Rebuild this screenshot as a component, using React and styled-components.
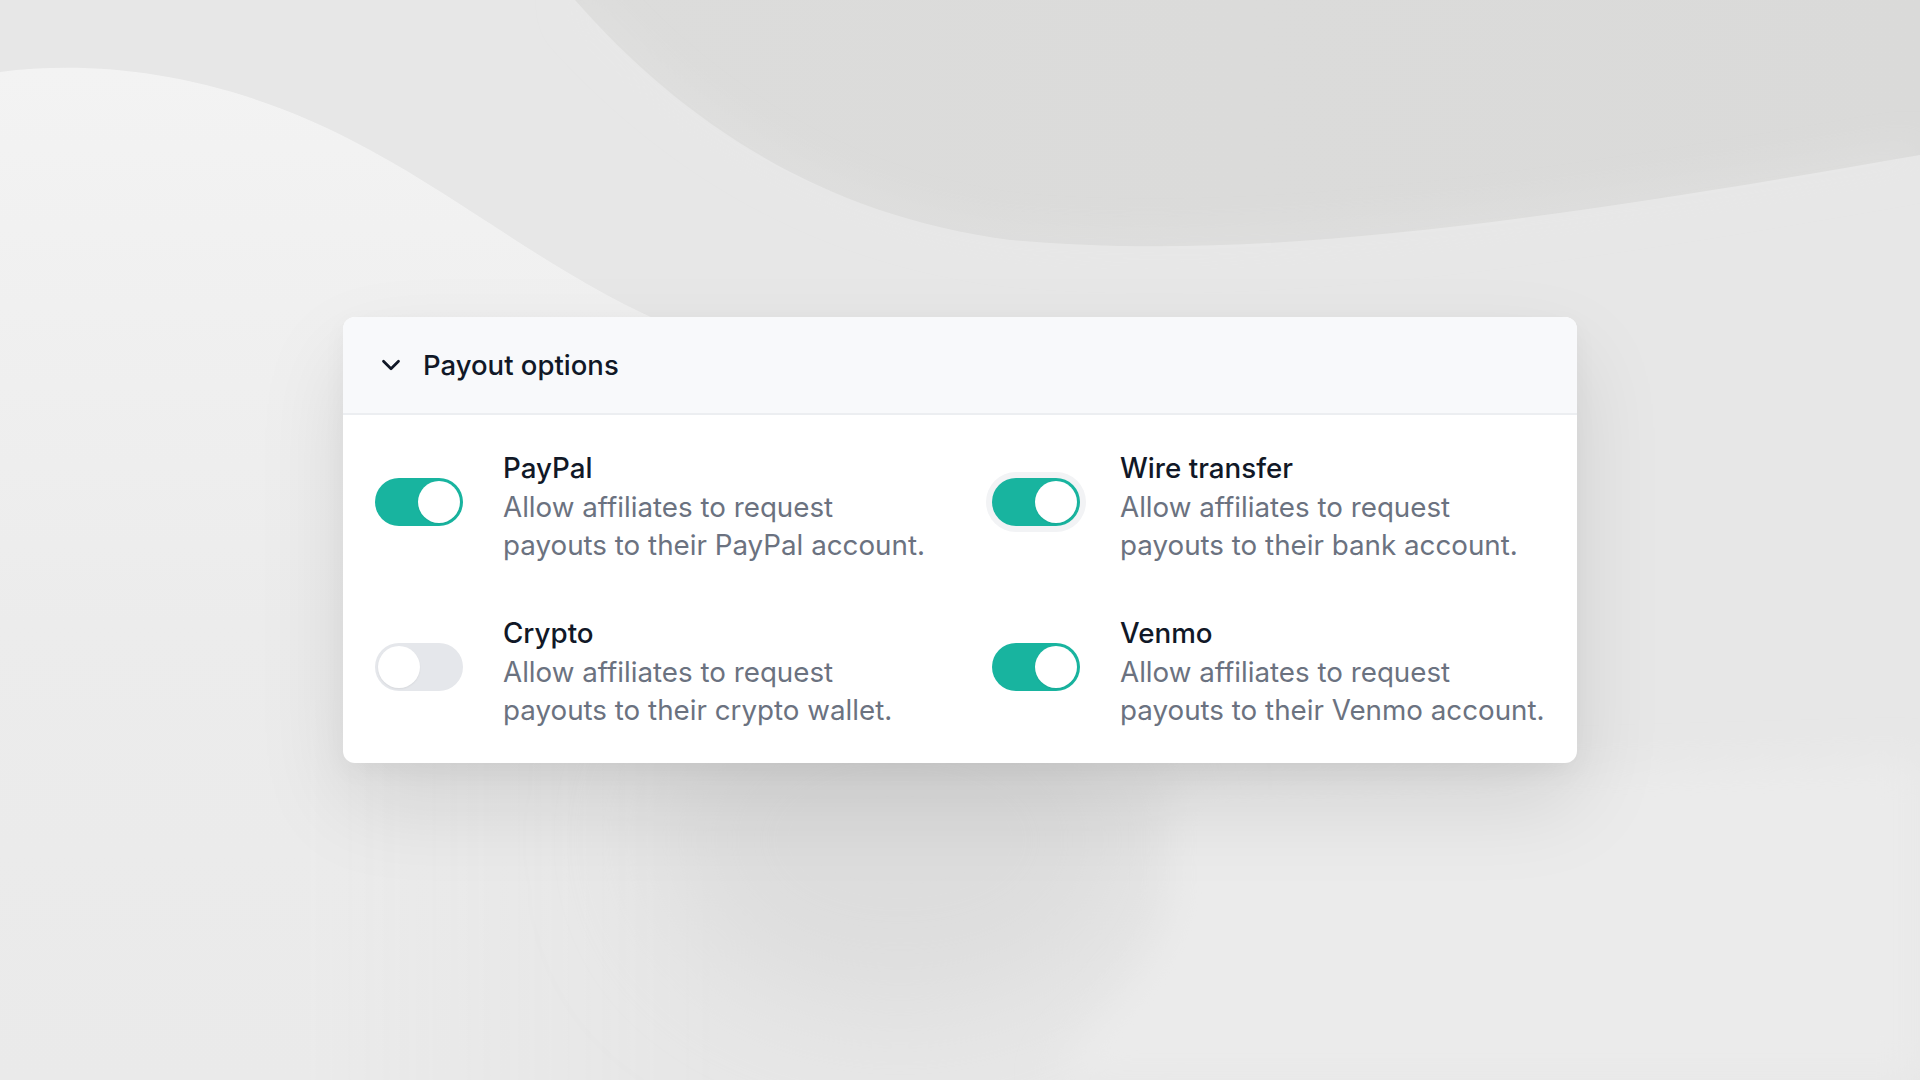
import { useState } from "react";
import styled, { createGlobalStyle } from "styled-components";

const GlobalStyle = createGlobalStyle`
  html, body {
    margin: 0;
    padding: 0;
    height: 100%;
  }
  body {
    font-family: Inter, "Noto Sans", "Liberation Sans", sans-serif;
    -webkit-font-smoothing: antialiased;
  }
`;

// options shown in the card
const payoutOptions = [
  {
    id: "paypal",
    title: "PayPal",
    lines: ["Allow affiliates to request", "payouts to their PayPal account."],
    enabled: true,
  },
  {
    id: "wire",
    title: "Wire transfer",
    lines: ["Allow affiliates to request", "payouts to their bank account."],
    enabled: true,
    focused: true,
  },
  {
    id: "crypto",
    title: "Crypto",
    lines: ["Allow affiliates to request", "payouts to their crypto wallet."],
    enabled: false,
  },
  {
    id: "venmo",
    title: "Venmo",
    lines: ["Allow affiliates to request", "payouts to their Venmo account."],
    enabled: true,
  },
];

//Soft wavy backdrop behind the card
const Backdrop = () => (
  <BackdropSvg viewBox="0 0 1920 1080" preserveAspectRatio="none">
    <defs>
      <filter id="soft" x="-20%" y="-20%" width="140%" height="140%">
        <feGaussianBlur stdDeviation="18" />
      </filter>
      <filter id="softer" x="-50%" y="-50%" width="200%" height="200%">
        <feGaussianBlur stdDeviation="60" />
      </filter>
      <linearGradient id="hill" x1="0" y1="0" x2="0" y2="1">
        <stop offset="0" stopColor="#f3f3f3" />
        <stop offset="0.55" stopColor="#ececec" />
        <stop offset="1" stopColor="#eaeaea" />
      </linearGradient>
      <linearGradient id="fadeRight" gradientUnits="userSpaceOnUse" x1="300" y1="0" x2="720" y2="0">
        <stop offset="0" stopColor="#fff" />
        <stop offset="1" stopColor="#000" />
      </linearGradient>
      <mask id="hillMask" maskUnits="userSpaceOnUse" x="0" y="0" width="1920" height="1080">
        <rect x="0" y="0" width="1920" height="700" fill="#fff" />
        <rect x="0" y="700" width="1920" height="380" fill="url(#fadeRight)" />
      </mask>
      <linearGradient id="band" x1="0" y1="0" x2="1" y2="0">
        <stop offset="0" stopColor="#dcdcdb" />
        <stop offset="1" stopColor="#dadad9" />
      </linearGradient>
    </defs>
    <rect width="1920" height="1080" fill="#e7e7e7" />
    <path
      d="M0 72 C 110 58 240 78 370 150 C 480 210 560 280 680 330 L 720 1080 L 0 1080 Z"
      fill="url(#hill)"
      mask="url(#hillMask)"
    />
    <path
      d="M575 0 C 680 120 820 215 1010 240 C 1250 262 1520 225 1920 155 L 1920 0 Z"
      fill="url(#band)"
    />
    <path
      d="M575 0 C 680 120 820 215 1010 240 C 1250 262 1520 225 1920 155"
      fill="none"
      stroke="#e9e9e9"
      strokeWidth="8"
      filter="url(#soft)"
    />
    <ellipse cx="900" cy="840" rx="240" ry="170" fill="#dddddd" filter="url(#softer)" />
    <path
      d="M1180 780 C 1160 840 1185 880 1165 930 C 1130 1000 1070 1040 1050 1080 L 1920 1080 L 1920 760 Z"
      fill="#ebebeb"
      filter="url(#soft)"
    />
  </BackdropSvg>
);

const Toggle = ({ on, focused, onClick }) => (
  <Switch type="button" $on={on} $focused={focused} onClick={onClick}>
    <Knob $on={on} />
  </Switch>
);

const App = () => {
  const [options, setOptions] = useState(payoutOptions);

  const flip = (id) => {
    setOptions((prev) =>
      prev.map((o) => (o.id === id ? { ...o, enabled: !o.enabled } : o))
    );
  };

  return (
    <Page>
      <GlobalStyle />
      <Backdrop />
      <Card>
        <Header>
          <Chevron viewBox="0 0 24 24">
            <path d="m6 9 6 6 6-6" />
          </Chevron>
          <HeaderTitle>Payout options</HeaderTitle>
        </Header>
        <Grid>
          {options.map((option) => (
            <Option key={option.id}>
              <Toggle
                on={option.enabled}
                focused={option.focused}
                onClick={() => flip(option.id)}
              />
              <Text>
                <Title>{option.title}</Title>
                <Description>
                  {option.lines.map((line) => (
                    <Line key={line}>{line}</Line>
                  ))}
                </Description>
              </Text>
            </Option>
          ))}
        </Grid>
      </Card>
    </Page>
  );
};

export default App;

const Page = styled.div`
  position: relative;
  width: 100%;
  min-height: 100vh;
  display: flex;
  align-items: center;
  justify-content: center;
  overflow: hidden;
  background: #e7e7e7;
`;

const BackdropSvg = styled.svg`
  position: absolute;
  inset: 0;
  width: 100%;
  height: 100%;
  z-index: 0;
`;

const Card = styled.section`
  position: relative;
  z-index: 1;
  width: 1234px;
  background: #ffffff;
  border-radius: 12px;
  overflow: hidden;
  box-shadow: 0 40px 90px rgba(0, 0, 0, 0.1), 0 8px 24px rgba(0, 0, 0, 0.04);
`;

const Header = styled.div`
  height: 96px;
  display: flex;
  align-items: center;
  gap: 17px;
  padding: 0 33px;
  background: #f8f9fb;
  border-bottom: 2px solid #eceef1;
`;

const Chevron = styled.svg`
  width: 30px;
  height: 30px;
  fill: none;
  stroke: #111827;
  stroke-width: 2.2;
  stroke-linecap: round;
  stroke-linejoin: round;
`;

const HeaderTitle = styled.h2`
  margin: 0;
  font-size: 27.5px;
  font-weight: 500;
  color: #111827;
`;

const Grid = styled.div`
  display: grid;
  grid-template-columns: 1fr 1fr;
  column-gap: 64px;
  row-gap: 50px;
  padding: 34px 32px 34px;
`;

const Option = styled.div`
  display: flex;
  align-items: flex-start;
  gap: 40px;
`;

const Switch = styled.button`
  position: relative;
  flex-shrink: 0;
  width: 88px;
  height: 48px;
  margin-top: 29px;
  padding: 0;
  border: none;
  border-radius: 24px;
  cursor: pointer;
  background: ${(props) => (props.$on ? "#18b49f" : "#e5e7eb")};
  box-shadow: ${(props) => (props.$focused ? "0 0 0 6px #f2f3f5" : "none")};
`;

const Knob = styled.span`
  position: absolute;
  top: 3px;
  left: ${(props) => (props.$on ? "43px" : "3px")};
  width: 42px;
  height: 42px;
  border-radius: 50%;
  background: #ffffff;
  box-shadow: 0 1px 2px rgba(0, 0, 0, 0.06);
`;

const Text = styled.div`
  display: flex;
  flex-direction: column;
  min-width: 0;
`;

const Title = styled.div`
  font-size: 27.75px;
  line-height: 39px;
  font-weight: 500;
  color: #111827;
`;

const Description = styled.div`
  font-size: 27.75px;
  line-height: 38px;
  color: #6b7280;
`;

const Line = styled.span`
  display: block;
  white-space: nowrap;
`;
